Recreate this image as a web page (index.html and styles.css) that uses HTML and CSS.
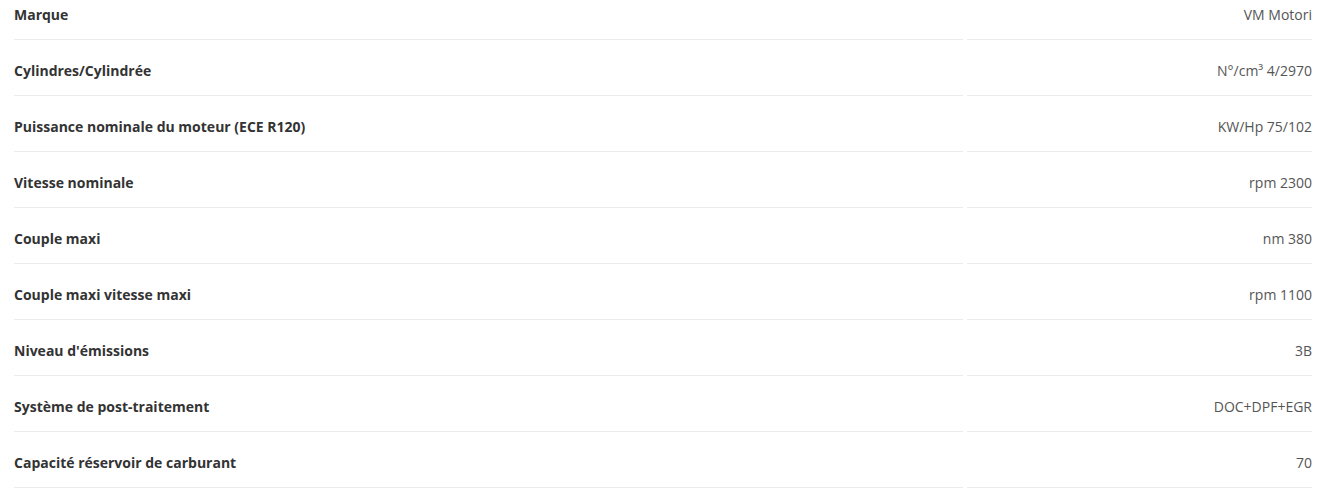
FILE: index.html
```html
<!DOCTYPE html>
<html lang="fr">
<head>
  <meta charset="UTF-8" />
  <title>Caractéristiques moteur</title>
  <link rel="stylesheet" href="styles.css">
</head>
<body>
  <div class="specs">
    <table class="spec-table">
      <tr><td class="label">Marque</td><td class="value">VM Motori</td></tr>
      <tr><td class="label">Cylindres/Cylindrée</td><td class="value">N°/cm³ 4/2970</td></tr>
      <tr><td class="label">Puissance nominale du moteur (ECE R120)</td><td class="value">KW/Hp 75/102</td></tr>
      <tr><td class="label">Vitesse nominale</td><td class="value">rpm 2300</td></tr>
      <tr><td class="label">Couple maxi</td><td class="value">nm 380</td></tr>
      <tr><td class="label">Couple maxi vitesse maxi</td><td class="value">rpm 1100</td></tr>
      <tr><td class="label">Niveau d'émissions</td><td class="value">3B</td></tr>
      <tr><td class="label">Système de post-traitement</td><td class="value">DOC+DPF+EGR</td></tr>
      <tr><td class="label">Capacité réservoir de carburant</td><td class="value">70</td></tr>
    </table>
  </div>
</body>
</html>
```

FILE: styles.css
```css
body {
  margin: 0;
  font-family: 'Open Sans', sans-serif;
  font-size: 14px;
  color: #555;
  background: #fff;
}
.specs {
  padding: 0 15px 0 10px;
  margin-top: -16px;
}
.spec-table {
  width: 100%;
  table-layout: fixed;
  border-collapse: separate;
  border-spacing: 4px 0;
}
.spec-table td {
  border-bottom: 1px solid #ececec;
  padding: 21px 0 14px;
  line-height: 20px;
}
.label {
  font-weight: 700;
  color: #333;
  width: 73.3%;
}
.value {
  text-align: right;
}
```
